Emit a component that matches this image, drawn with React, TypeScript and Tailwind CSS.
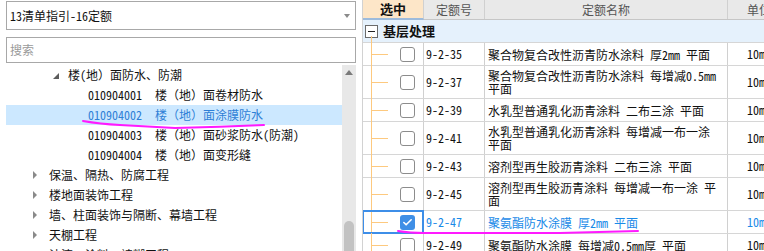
import { Check } from "lucide-react";

const font = "font-['Noto_Sans_Mono_CJK_SC','Noto_Sans_CJK_SC',monospace]";

type TreeRow =
  | { kind: "open"; text: string }
  | { kind: "leaf"; code: string; name: string; active?: boolean }
  | { kind: "closed"; text: string };

const tree: TreeRow[] = [
  { kind: "open", text: "楼(地）面防水、防潮" },
  { kind: "leaf", code: "010904001", name: "楼（地）面卷材防水" },
  { kind: "leaf", code: "010904002", name: "楼（地）面涂膜防水", active: true },
  { kind: "leaf", code: "010904003", name: "楼（地）面砂浆防水(防潮)" },
  { kind: "leaf", code: "010904004", name: "楼（地）面变形缝" },
  { kind: "closed", text: "保温、隔热、防腐工程" },
  { kind: "closed", text: "楼地面装饰工程" },
  { kind: "closed", text: "墙、柱面装饰与隔断、幕墙工程" },
  { kind: "closed", text: "天棚工程" },
  { kind: "closed", text: "油漆、涂料、裱糊工程" },
];

// names are pre-split the way the grid wraps them
const rows = [
  { code: "9-2-35", name: ["聚合物复合改性沥青防水涂料 厚2mm 平面"] },
  { code: "9-2-37", name: ["聚合物复合改性沥青防水涂料 每增减0.5mm", "平面"] },
  { code: "9-2-39", name: ["水乳型普通乳化沥青涂料 二布三涂 平面"] },
  { code: "9-2-41", name: ["水乳型普通乳化沥青涂料 每增减一布一涂", "平面"] },
  { code: "9-2-43", name: ["溶剂型再生胶沥青涂料 二布三涂 平面"] },
  { code: "9-2-45", name: ["溶剂型再生胶沥青涂料 每增减一布一涂 平", "面"] },
  { code: "9-2-47", name: ["聚氨酯防水涂膜 厚2mm 平面"], checked: true },
  { code: "9-2-49", name: ["聚氨酯防水涂膜 每增减0.5mm厚 平面"] },
];

function TreeItem({ row }: { row: TreeRow }) {
  if (row.kind === "open") {
    return (
      <div className="h-[20px] flex items-center">
        <svg width="6" height="6" className="ml-[47px] mt-[1px]">
          <polygon points="6,0 6,6 0,6" fill="#5c5c5c" />
        </svg>
        <span className="ml-[9px]">{row.text}</span>
      </div>
    );
  }
  if (row.kind === "closed") {
    return (
      <div className="h-[20px] flex items-center">
        <svg width="5" height="8" className="ml-[27px]">
          <polygon points="0,0 4,4 0,8" fill="#8a8a8a" />
        </svg>
        <span className="ml-[11px]">{row.text}</span>
      </div>
    );
  }
  return (
    <div
      className={`h-[20px] flex items-center ${
        row.active ? "bg-[#cce8ff] text-[#2f7fd6]" : ""
      }`}
    >
      <span className="ml-[82px] w-[67px]">{row.code}</span>
      <span>{row.name}</span>
    </div>
  );
}

export default function App() {
  return (
    <div className={`relative w-[764px] h-[251px] overflow-hidden bg-white flex text-[12px] text-[#111] ${font}`}>
      {/* left: guide tree */}
      <div className="w-[356px] h-full flex flex-col shrink-0">
        <div className="ml-[6px] mt-[1px] h-[29px] border border-[#a8a8a8] flex items-center justify-between pl-[3px] pr-[5px]">
          <span>13清单指引-16定额</span>
          <svg width="6" height="4">
            <polygon points="0,0 6,0 3,4" fill="#8a8a8a" />
          </svg>
        </div>
        <div className="ml-[6px] mt-[7px] h-[26px] border border-[#a8a8a8] flex items-center pl-[3px] text-[#9a9a9a]">
          搜索
        </div>
        <div className="flex flex-1 mt-[2px] min-h-0">
          <div className="flex-1 ml-[6px] leading-[20px] whitespace-nowrap overflow-hidden">
            {tree.map((r, i) => (
              <TreeItem key={i} row={r} />
            ))}
          </div>
          <div className="w-[14px] bg-[#e8e8e8] flex flex-col items-center">
            <svg width="8" height="5" className="mt-[5px]">
              <polygon points="0,5 8,5 4,0" fill="#7a7a7a" />
            </svg>
            <div className="mt-auto w-[10px] h-[30px] rounded-t-[5px] bg-[#c2c2c2]" />
          </div>
        </div>
      </div>

      {/* right: quota table */}
      <div className="ml-[6px] w-[402px] shrink-0 overflow-hidden border-l border-[#d2d2d2] flex flex-col">
        <div className="h-[20px] flex shrink-0 border-b border-[#c6c6c6] bg-[#e9e9e9] text-[#555]">
          <div className="w-[61px] shrink-0 border-r border-[#d0d0d0] bg-[#fde6c8] text-[#111] font-bold text-[13px] flex items-center justify-center border-b-2 border-b-[#9dbbdc] -mb-px">
            选中
          </div>
          <div className="w-[61px] shrink-0 border-r border-[#d0d0d0] flex items-center justify-center">定额号</div>
          <div className="w-[243px] shrink-0 border-r border-[#d0d0d0] flex items-center justify-center">定额名称</div>
          <div className="w-[60px] shrink-0 flex items-center justify-center pl-[2px]">单位</div>
        </div>

        <div className="h-[23px] shrink-0 flex items-center bg-[#e5f1fc] border-b border-[#d6d6d6] relative">
          <div className="ml-[2px] w-[13px] h-[13px] border border-[#6b6b6b] bg-white flex items-center justify-center">
            <div className="w-[7px] h-[1px] bg-[#222]" />
          </div>
          <span className="ml-[5px] font-bold text-[13px]">基层处理</span>
          <div className="absolute left-[8px] top-[16px] bottom-0 w-px bg-[#fdc97f]" />
        </div>

        {rows.map((r) => (
          <div
            key={r.code}
            className={`flex shrink-0 border-b border-[#d6d6d6] ${r.name.length > 1 ? "h-[33px]" : "h-[23px]"} ${
              r.checked ? "text-[#1a8ae8]" : ""
            }`}
          >
            <div className="relative w-[61px] shrink-0 border-r border-[#d0d0d0] flex items-center">
              <div className="absolute left-[8px] -top-px -bottom-px w-px bg-[#fdc97f]" />
              <div className="ml-[9px] w-[16px] h-px bg-[#fdc97f]" />
              {r.checked ? (
                <div className="ml-[12px] w-[15px] h-[15px] rounded-[3px] bg-[#3f8fe6] flex items-center justify-center">
                  <Check size={11} strokeWidth={3.5} color="#fff" />
                </div>
              ) : (
                <div className="ml-[12px] w-[15px] h-[15px] rounded-[3px] border border-[#8c8c8c] bg-white" />
              )}
              {r.checked && (
                <div className="absolute -left-px -top-px right-[-1px] bottom-[-1px] border-2 border-[#3d8ee8]" />
              )}
            </div>
            <div className="w-[61px] shrink-0 border-r border-[#d0d0d0] flex items-center pl-[2px]">{r.code}</div>
            <div className="w-[243px] shrink-0 border-r border-[#d0d0d0] flex flex-col justify-center pl-[3px] leading-[13px] whitespace-nowrap overflow-hidden">
              {r.name.map((line) => (
                <span key={line}>{line}</span>
              ))}
            </div>
            <div className="w-[60px] shrink-0 flex items-center justify-center pl-[2px]">10m2</div>
          </div>
        ))}
      </div>

      {/* hand-drawn highlight marks */}
      <svg className="absolute inset-0 pointer-events-none" width="764" height="251">
        <path
          d="M83 121 Q 100 124 120 125 L 175 128 Q 220 127 264 125"
          stroke="#ff1aff"
          strokeWidth="2"
          fill="none"
          strokeLinecap="round"
        />
        <path
          d="M398 231 Q 410 233 425 233 L 560 233 Q 600 232 638 231"
          stroke="#ff1aff"
          strokeWidth="2"
          fill="none"
          strokeLinecap="round"
        />
      </svg>
    </div>
  );
}
